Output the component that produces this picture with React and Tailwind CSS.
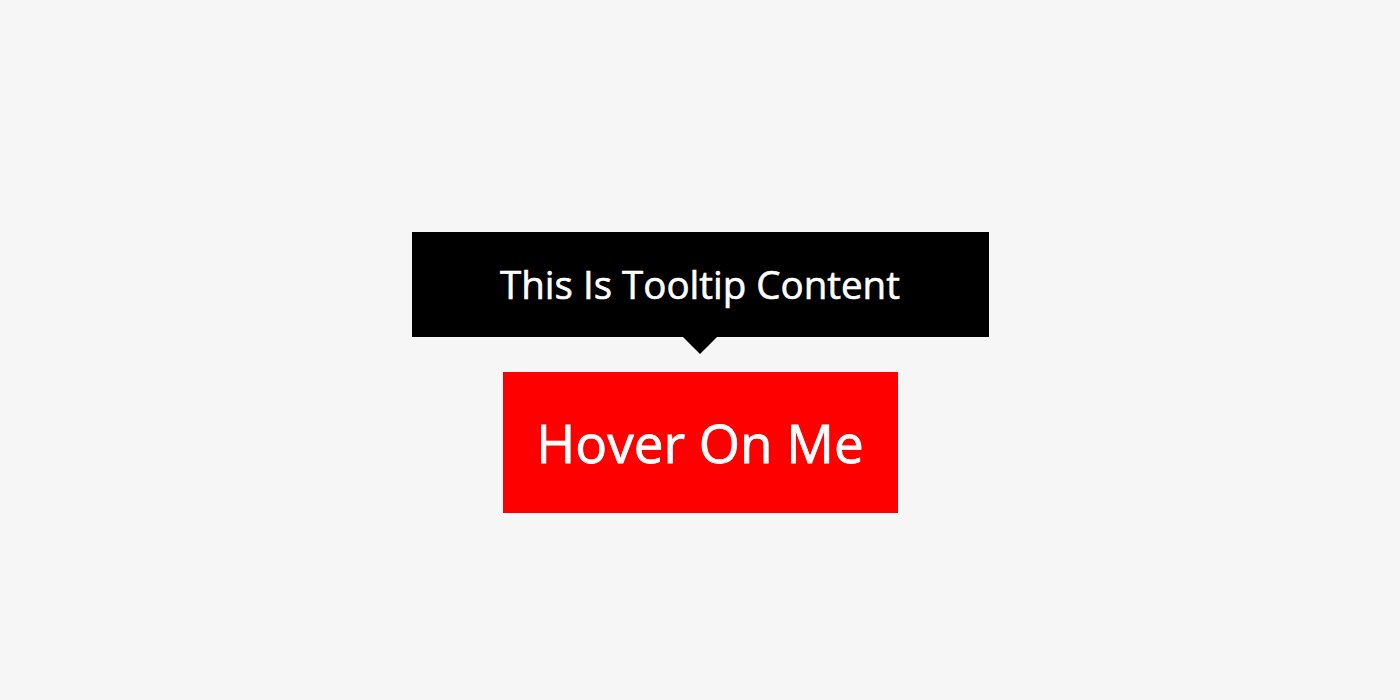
import React from 'react'

export default function App() {
  return (
    <div
      className="min-h-screen w-full bg-[#f6f6f6] flex flex-col items-center pt-[232px]"
      style={{ fontFamily: '"Open Sans", "Liberation Sans", sans-serif' }}
    >
      {/* Tooltip */}
      <div className="relative w-[577px] h-[105px] bg-black flex items-center justify-center">
        <span className="text-white text-[38.5px] font-normal leading-none [-webkit-text-stroke:0.6px_white]">This Is Tooltip Content</span>
        <span className="absolute left-1/2 -translate-x-1/2 top-full w-0 h-0 border-l-[17px] border-r-[17px] border-t-[17px] border-l-transparent border-r-transparent border-t-black" />
      </div>

      {/* Button */}
      <button className="mt-[35px] w-[395px] h-[141px] bg-[#ff0000] text-white text-[53px] font-normal leading-none flex items-center justify-center [-webkit-text-stroke:0.8px_white]">
        Hover On Me
      </button>
    </div>
  )
}
